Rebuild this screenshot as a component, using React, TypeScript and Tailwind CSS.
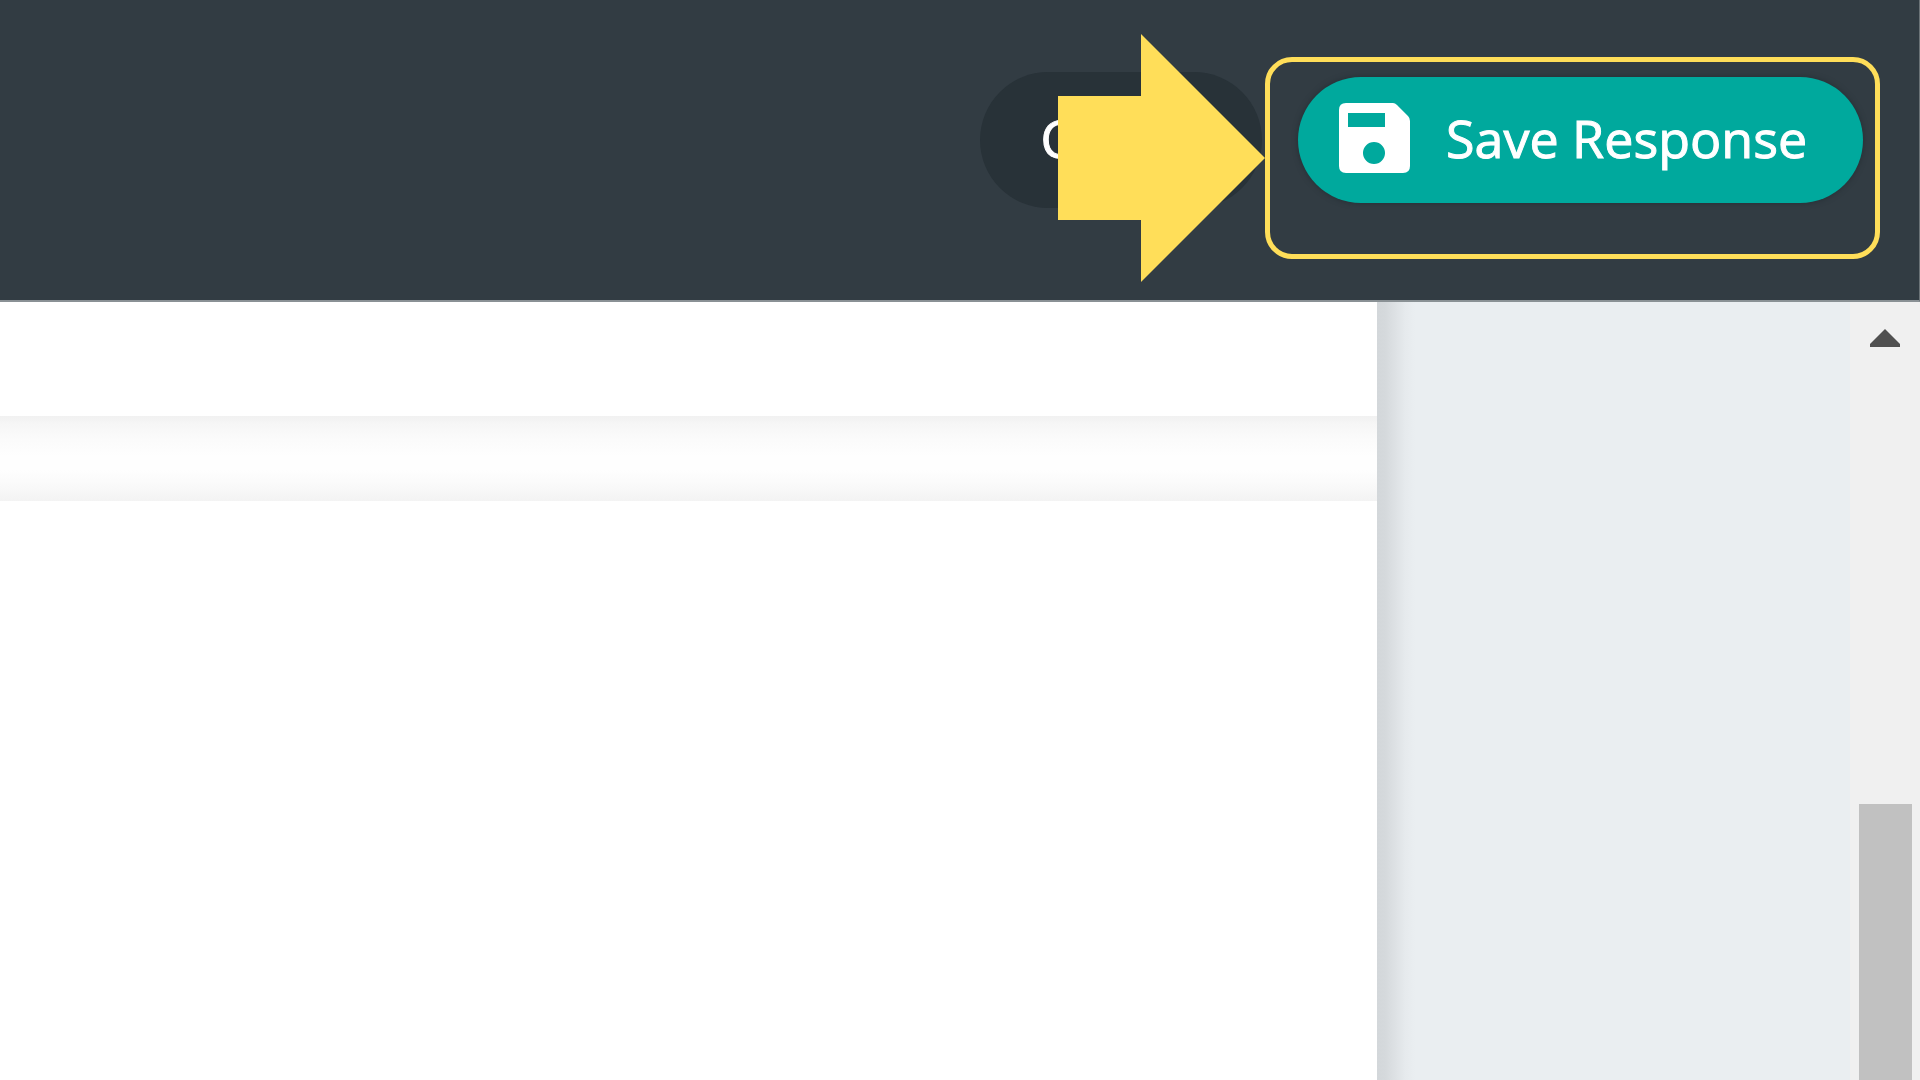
export default function App() {
  return (
    <div className="min-h-screen flex flex-col bg-white font-['Open_Sans','Noto_Sans',sans-serif]">
      <Header />
      <div className="flex-1 flex">
        <main className="flex-1 min-w-0">
          <div className="h-[114px]" />
          <div className="h-[85px] bg-[linear-gradient(to_bottom,#f1f1f1_0px,#f6f6f6_8px,#fbfbfb_24px,#fefefe_40px,#fefefe_54px,#fafafa_68px,#f3f3f3_85px)]" />
        </main>
        <aside className="w-[473px] shrink-0 bg-[linear-gradient(to_right,#d3d7da_0px,#d5d9dc_8px,#dde1e4_18px,#e6eaed_28px,#eaeef1_38px)]" />
        <Scrollbar />
      </div>
    </div>
  );
}

function Header() {
  return (
    <header className="h-[302px] shrink-0 flex justify-end items-start pt-[72px] pr-[56px] bg-[#323c43] border-b-2 border-r border-b-[#8a9195] border-r-[#6b7377] text-white text-[52px] leading-[72px] [-webkit-text-stroke:1px_white]">
      <div className="flex items-center gap-9">
        <button className="h-[136px] w-[282px] pb-1 rounded-full bg-[#283238]">Cancel</button>
        <div className="relative">
          <button className="h-[126px] w-[565px] pl-[41px] pb-1 flex items-center gap-9 rounded-full bg-[#00a99d] shadow-[0_0_5px_1px_#283238]">
            <SaveIcon />
            <span className="whitespace-nowrap">Save Response</span>
          </button>
          <Callout />
        </div>
      </div>
    </header>
  );
}

function Callout() {
  return (
    <div className="pointer-events-none absolute -top-5 -bottom-[56px] -left-[33px] -right-[17px] border-[5px] border-[#ffde59] rounded-[27px]">
      <svg className="absolute right-full -top-7 mr-[5px] w-[207px] h-[248px] max-w-none" viewBox="0 0 207 248" fill="#ffde59">
        <path d="M0 62H83V0L207 124L83 248V186H0Z" />
      </svg>
    </div>
  );
}

function SaveIcon() {
  return (
    <svg className="w-[71px] h-[71px] shrink-0" viewBox="0 0 71 71" fill="white" fillRule="evenodd">
      <path d="M7 0H54Q56 0 58 2L69 13Q71 15 71 18V63Q71 70 64 70H7Q0 70 0 63V7Q0 0 7 0ZM9 10V24H46V10ZM35 39A11 11 0 1 0 35 61A11 11 0 1 0 35 39Z" />
    </svg>
  );
}

function Scrollbar() {
  return (
    <div className="w-[70px] shrink-0 flex flex-col items-center bg-[#f0f0f0]">
      <button aria-label="Scroll up" className="w-full pt-[27px] flex justify-center">
        <svg className="w-[30px] h-[18px]" viewBox="0 0 30 18" fill="#505050">
          <path d="M15 0L30 15V18H0V15Z" />
        </svg>
      </button>
      <div className="mt-[457px] w-[53px] flex-1 bg-[#c1c1c1]" />
    </div>
  );
}
